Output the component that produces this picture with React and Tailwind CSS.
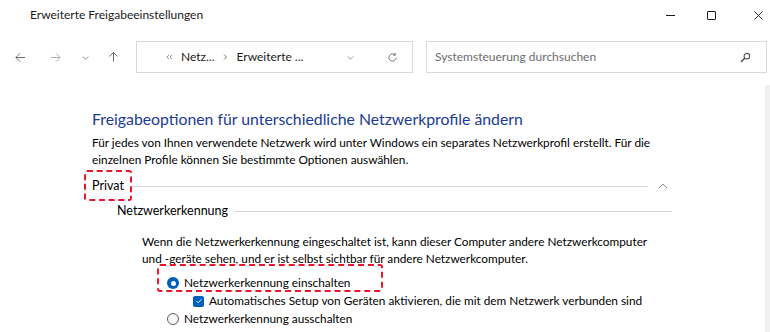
import { useState } from 'react'

const font = { fontFamily: 'Lato, "Noto Sans", sans-serif' }

function Arrow({ dir = 'left', className = '' }) {
  const paths = {
    left: 'M11 6H1M5.5 1.5 1 6l4.5 4.5',
    right: 'M1 6h10M6.5 1.5 11 6l-4.5 4.5',
    up: 'M6 11V1M1.5 5.5 6 1l4.5 4.5',
  }
  return (
    <svg viewBox="0 0 12 12" className={className} fill="none" stroke="currentColor" strokeWidth="1">
      <path d={paths[dir]} />
    </svg>
  )
}

function Chevron({ dir = 'down', className = '' }) {
  const d = dir === 'down' ? 'M1 3.5 5 7.5 9 3.5' : 'M1 7 5 3l4 4'
  return (
    <svg viewBox="0 0 10 10" className={className} fill="none" stroke="currentColor" strokeWidth="1">
      <path d={d} />
    </svg>
  )
}

function Radio({ checked }) {
  return checked ? (
    <span className="flex h-[12px] w-[12px] items-center justify-center rounded-full bg-[#005fb8]">
      <span className="h-[5px] w-[5px] rounded-full bg-white" />
    </span>
  ) : (
    <span className="h-[12px] w-[12px] rounded-full border border-[#5c5c5c] bg-[#f7f7f7]" />
  )
}

function Marker({ className }) {
  return <span className={`pointer-events-none absolute rounded-[3px] border-2 border-dashed border-[#e8182c] ${className}`} />
}

export default function App() {
  const [discovery, setDiscovery] = useState('on')
  const [autoSetup, setAutoSetup] = useState(true)

  return (
    <div className="flex h-[332px] w-[770px] flex-col overflow-hidden bg-white text-[11.8px] text-black" style={font}>
      <div className="flex h-[30px] shrink-0 items-center">
        <span className="pl-[30px] text-[12px] text-[#1a1a1a]">Erweiterte Freigabeeinstellungen</span>
        <div className="ml-auto mr-[7px] flex items-center text-[#1a1a1a]">
          <span className="h-px w-[9px] bg-[#1a1a1a]" />
          <span className="ml-[32px] h-[9px] w-[9px] rounded-[1px] border border-[#1a1a1a]" />
          <svg viewBox="0 0 10 10" className="ml-[38px] h-[9px] w-[9px]" stroke="currentColor" strokeWidth="1">
            <path d="M0.5 0.5 9.5 9.5M9.5 0.5 0.5 9.5" />
          </svg>
        </div>
      </div>

      <div className="mt-[11px] flex h-[32px] shrink-0 items-center">
        <div className="flex items-center text-[#606060]">
          <Arrow dir="left" className="ml-[15px] h-[11px] w-[11px]" />
          <Arrow dir="right" className="ml-[24px] h-[11px] w-[11px] text-[#a6a6a6]" />
          <Chevron dir="down" className="ml-[21px] h-[7px] w-[7px]" />
          <Arrow dir="up" className="ml-[19px] h-[12px] w-[11px]" />
        </div>
        <div className="ml-[17px] flex h-[32px] w-[277px] items-center border border-[#d9d9d9] text-[12px] text-[#1a1a1a]">
          <svg viewBox="0 0 8 6" className="ml-[29px] h-[6px] w-[7px] text-[#707070]" fill="none" stroke="currentColor" strokeWidth="0.9">
            <path d="M3.5 0.5 1 3l2.5 2.5M7 0.5 4.5 3 7 5.5" />
          </svg>
          <span className="ml-[8px]">Netz...</span>
          <svg viewBox="0 0 4 6" className="ml-[8px] h-[6px] w-[4px] text-[#707070]" fill="none" stroke="currentColor" strokeWidth="1">
            <path d="M1 0.5 3.5 3 1 5.5" />
          </svg>
          <span className="ml-[10px]">Erweiterte ...</span>
          <Chevron dir="down" className="ml-auto mr-[5px] h-[7px] w-[7px] text-[#707070]" />
          <span className="mr-[14px] ml-[28px] flex">
            <svg viewBox="0 0 12 12" className="h-[11px] w-[11px] text-[#707070]" fill="none" stroke="currentColor" strokeWidth="1">
              <path d="M10 6a4 4 0 1 1-1.2-2.9" />
              <path d="M9 1v2.5H6.5" />
            </svg>
          </span>
        </div>
        <div className="ml-[13px] flex h-[32px] w-[341px] items-center border border-[#d9d9d9] text-[12px]">
          <span className="ml-[8px] text-[#6b6b6b]">Systemsteuerung durchsuchen</span>
          <svg viewBox="0 0 12 12" className="ml-auto mr-[15px] h-[11px] w-[11px] text-[#555]" fill="none" stroke="currentColor" strokeWidth="1.2">
            <circle cx="7.5" cy="4.5" r="3" />
            <path d="M5.3 6.7 1 11" strokeWidth="1.6" />
          </svg>
        </div>
      </div>

      <div className="mt-[12px] flex min-h-0 flex-1">
        <main className="flex-1 pl-[92px]">
          <div className="w-[580px]">
            <h1 className="mt-[23px] text-[15.8px] leading-[22px] text-[#1b3b96]">
              Freigabeoptionen für unterschiedliche Netzwerkprofile ändern
            </h1>
            <p className="mt-[4px] leading-[17px]">
              Für jedes von Ihnen verwendete Netzwerk wird unter Windows ein separates Netzwerkprofil erstellt. Für die
              einzelnen Profile können Sie bestimmte Optionen auswählen.
            </p>

            <div className="mt-[5px] flex h-[26px] items-center">
              <span className="relative text-[12.5px]">
                Privat
                <Marker className="-top-[7px] -bottom-[6px] -left-[8px] -right-[8px]" />
              </span>
              <span className="ml-[8px] h-px flex-1 bg-[#d6d6d6]" />
              <span className="flex w-[24px] justify-end pr-[4px]">
                <Chevron dir="up" className="h-[10px] w-[10px] text-[#8a8a8a]" />
              </span>
            </div>

            <div className="mt-[2px] flex h-[20px] items-center pl-[25px]">
              <span className="text-[12.5px]">Netzwerkerkennung</span>
              <span className="ml-[6px] h-px flex-1 bg-[#d6d6d6]" />
            </div>

            <p className="mt-[12px] pl-[50px] leading-[17px]">
              Wenn die Netzwerkerkennung eingeschaltet ist, kann dieser Computer andere Netzwerkcomputer
              <br />
              und -geräte sehen, und er ist selbst sichtbar für andere Netzwerkcomputer.
            </p>

            <div className="mt-[7px] pl-[75px]">
              <label className="relative flex h-[18px] w-fit items-center gap-[5px]" onClick={() => setDiscovery('on')}>
                <Radio checked={discovery === 'on'} />
                <span>Netzwerkerkennung einschalten</span>
                <Marker className="-top-[10px] bottom-0 -left-[10px] -right-[33px]" />
              </label>
              <label className="ml-[26px] flex h-[18px] items-center gap-[5px]" onClick={() => setAutoSetup(!autoSetup)}>
                <span className={`flex h-[11px] w-[11px] items-center justify-center rounded-[2px] ${autoSetup ? 'bg-[#005fb8]' : 'border border-[#5c5c5c]'}`}>
                  {autoSetup && (
                    <svg viewBox="0 0 10 10" className="h-[8px] w-[8px]" fill="none" stroke="white" strokeWidth="1.2">
                      <path d="M2 5.2 4 7.2 8 3" />
                    </svg>
                  )}
                </span>
                <span>Automatisches Setup von Geräten aktivieren, die mit dem Netzwerk verbunden sind</span>
              </label>
              <label className="flex h-[18px] items-center gap-[5px]" onClick={() => setDiscovery('off')}>
                <Radio checked={discovery === 'off'} />
                <span>Netzwerkerkennung ausschalten</span>
              </label>
            </div>
          </div>
        </main>
        <div className="h-full w-[5px] shrink-0 bg-[#f0f0f0]" />
      </div>
    </div>
  )
}
